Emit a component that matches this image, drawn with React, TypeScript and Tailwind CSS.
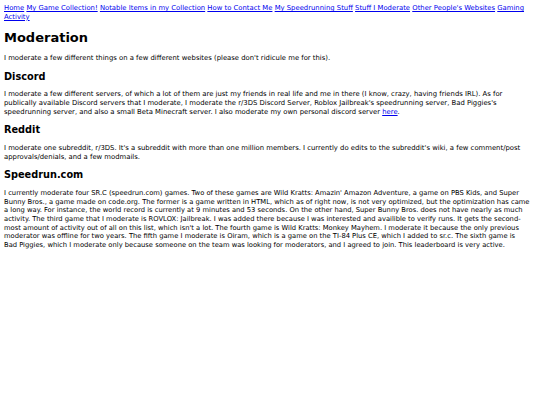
import React from 'react';

const navLinks = [
  'Home',
  'My Game Collection!',
  'Notable Items in my Collection',
  'How to Contact Me',
  'My Speedrunning Stuff',
  'Stuff I Moderate',
  "Other People's Websites",
  'Gaming Activity',
];

const App: React.FC = () => {
  return (
    <div className="min-h-[405px] bg-white p-[4px] text-[6.85px] leading-[8.7px] text-black [font-family:'DejaVu_Sans',Verdana,sans-serif]">
      {/* nav */}
      <div>
        {navLinks.map((label, idx) => (
          <React.Fragment key={label}>
            <a href="#" className="text-[#0000ee] underline">
              {label}
            </a>
            {idx < navLinks.length - 1 && ' '}
          </React.Fragment>
        ))}
      </div>

      <h1 className="my-[8.7px] text-[13px] leading-[15.1px] font-bold">Moderation</h1>
      <p className="my-[6.5px]">
        I moderate a few different things on a few different websites (please don't ridicule me for this).
      </p>

      <h2 className="my-[8.1px] text-[9.75px] leading-[11.4px] font-bold">Discord</h2>
      <p className="my-[6.5px]">
        I moderate a few different servers, of which a lot of them are just my friends in real life and me in
        there (I know, crazy, having friends IRL). As for publically available Discord servers that I moderate, I
        moderate the r/3DS Discord Server, Roblox Jailbreak's speedrunning server, Bad Piggies's speedrunning
        server, and also a small Beta Minecraft server. I also moderate my own personal discord server{' '}
        <a href="#" className="text-[#0000ee] underline">
          here
        </a>
        .
      </p>

      <h2 className="my-[8.1px] text-[9.75px] leading-[11.4px] font-bold">Reddit</h2>
      <p className="my-[6.5px]">
        I moderate one subreddit, r/3DS. It's a subreddit with more than one million members. I currently do edits
        to the subreddit's wiki, a few comment/post approvals/denials, and a few modmails.
      </p>

      <h2 className="my-[8.1px] text-[9.75px] leading-[11.4px] font-bold">Speedrun.com</h2>
      {/* line breaks kept as in the original page */}
      <p className="my-[6.5px] text-[6.75px] whitespace-nowrap">
        I currently moderate four SR.C (speedrun.com) games. Two of these games are Wild Kratts: Amazin' Amazon
        Adventure, a game on PBS Kids, and Super
        <br />
        Bunny Bros., a game made on code.org. The former is a game written in HTML, which as of right now, is not
        very optimized, but the optimization has came
        <br />
        a long way. For instance, the world record is currently at 9 minutes and 53 seconds. On the other hand,
        Super Bunny Bros. does not have nearly as much
        <br />
        activity. The third game that I moderate is ROVLOX: Jailbreak. I was added there because I was interested
        and availible to verify runs. It gets the second-
        <br />
        most amount of activity out of all on this list, which isn't a lot. The fourth game is Wild Kratts: Monkey
        Mayhem. I moderate it because the only previous
        <br />
        moderator was offline for two years. The fifth game I moderate is Oiram, which is a game on the TI-84 Plus
        CE, which I added to sr.c. The sixth game is
        <br />
        Bad Piggies, which I moderate only because someone on the team was looking for moderators, and I agreed to
        join. This leaderboard is very active.
      </p>
    </div>
  );
};

export default App;
